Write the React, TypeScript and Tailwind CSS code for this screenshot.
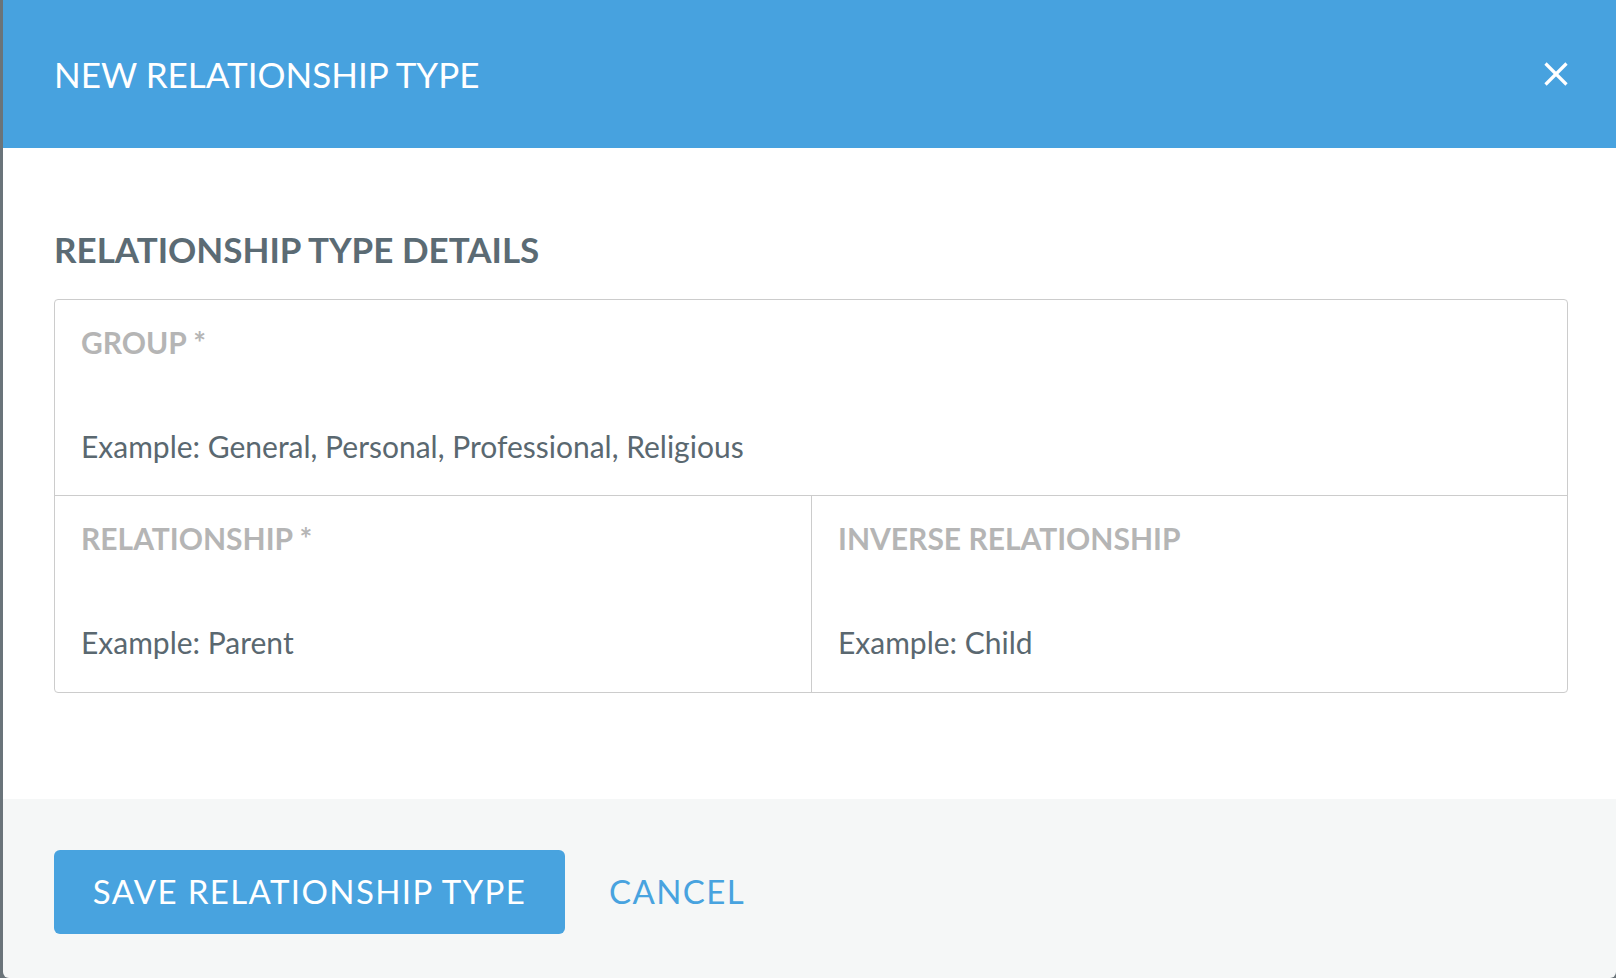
export default function App() {
  return (
    <div className="flex h-[978px] w-full bg-[#6a747a] font-['Lato',sans-serif]">
      <div className="ml-[3px] flex flex-1 flex-col overflow-hidden rounded-b-[6px]">
        <div className="flex h-[148px] items-center justify-between bg-[#47a2df] pl-[51px] pr-[48px]">
          <h1 className="text-[35px] leading-none text-white">NEW RELATIONSHIP TYPE</h1>
          <button type="button" className="text-white">
            <svg width="24" height="24" viewBox="0 0 24 24" fill="none" stroke="currentColor" strokeWidth="3.2">
              <line x1="1.5" y1="1.5" x2="22.5" y2="22.5" />
              <line x1="22.5" y1="1.5" x2="1.5" y2="22.5" />
            </svg>
          </button>
        </div>

        <div className="flex flex-col bg-white pl-[51px] pr-[48px] pt-[83px] pb-[106px]">
          <h2 className="text-[35px] font-bold leading-[36px] text-[#5b6b74]">RELATIONSHIP TYPE DETAILS</h2>
          <div className="mt-[32px] rounded-[4px] border border-[#cccccc]">
            <Field label="GROUP *" example="Example: General, Personal, Professional, Religious" tall />
            <div className="grid grid-cols-2 border-t border-[#cccccc]">
              <Field label="RELATIONSHIP *" example="Example: Parent" />
              <div className="border-l border-[#cccccc]">
                <Field label="INVERSE RELATIONSHIP" example="Example: Child" />
              </div>
            </div>
          </div>
        </div>

        <div className="flex flex-1 items-start gap-[44px] bg-[#f5f7f7] pl-[51px] pt-[51px]">
          <button
            type="button"
            className="h-[84px] w-[511px] rounded-[6px] bg-[#48a3df] text-[33px] tracking-[1.4px] text-white"
          >
            SAVE RELATIONSHIP TYPE
          </button>
          <button type="button" className="h-[84px] text-[33px] tracking-[1.4px] text-[#48a3df]">
            CANCEL
          </button>
        </div>
      </div>
    </div>
  );
}

function Field({ label, example, tall }: { label: string; example: string; tall?: boolean }) {
  return (
    <div className={tall ? "flex h-[195px] flex-col px-[26px] pt-[26px]" : "flex h-[196px] flex-col px-[26px] pt-[26px]"}>
      <div className="text-[30px] font-bold leading-[32px] text-[#b5b5b5]">{label}</div>
      <div className="mt-[72px] text-[30px] leading-[32px] text-[#5a6870]">{example}</div>
    </div>
  );
}
